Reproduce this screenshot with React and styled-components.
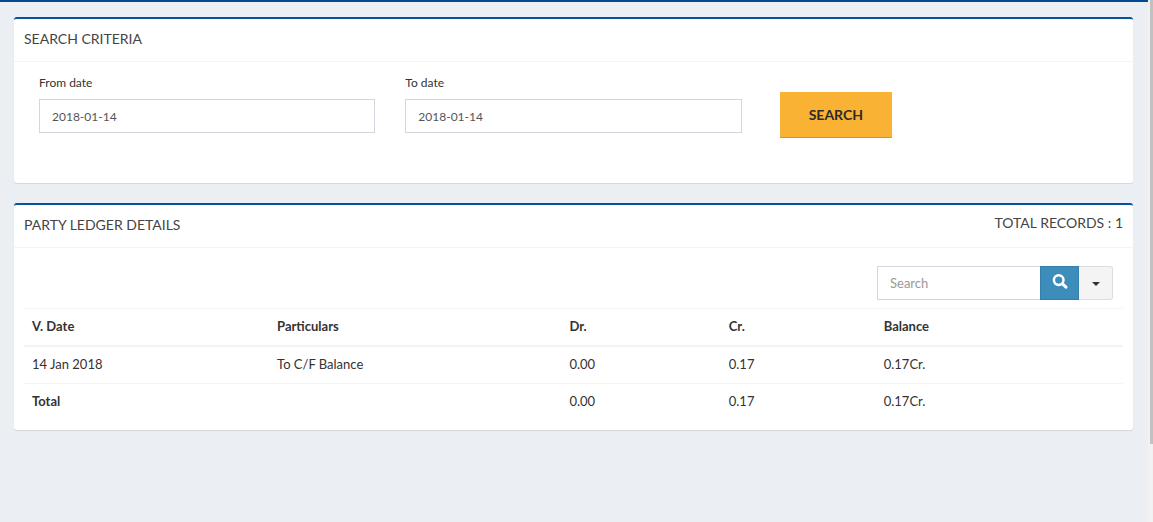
import React from "react";
import styled, { createGlobalStyle } from "styled-components";

const Global = createGlobalStyle`
  *, *::before, *::after { box-sizing: border-box; }
  body {
    margin: 0;
    background: #ebeef3;
    color: #333;
    font: 400 13px/20px Lato, Calibri, "Liberation Sans", sans-serif;
  }
  button, input { font: inherit; color: inherit; margin: 0; border-radius: 0; }
`;

const Page = styled.div`
  display: flex;
  min-height: 100vh;
`;

const Main = styled.main`
  flex: 1;
  min-width: 0;
  display: flex;
  flex-direction: column;
  gap: 20px;
  padding: 15px 15px 0 14px;
  border-top: 2px solid #004b93;
`;

const ScrollTrack = styled.div`
  width: 5px;
  padding-left: 2px;
  background: #f1f1f1;
`;

const ScrollThumb = styled.div`
  height: 85vh;
  background: #c1c1c1;
`;

const Card = styled.section`
  background: #fff;
  border-top: 2px solid #04539b;
  border-radius: 3px;
  box-shadow: 0 1px 1px rgba(0, 0, 0, 0.1);
`;

const CardHeader = styled.header`
  display: flex;
  justify-content: space-between;
  padding: 10px 10px 12px;
  border-bottom: 1px solid #f4f4f4;
`;

const Title = styled.h3`
  margin: 0;
  color: #444;
  font-size: 14px;
  line-height: 20px;
  font-weight: 400;
  text-transform: uppercase;
`;

const Records = styled(Title).attrs({ as: "div" })`
  line-height: 16px;
`;

const Form = styled.form`
  display: grid;
  grid-template-columns: repeat(3, 1fr);
  padding: 10px 10px 50px;
`;

const Field = styled.div`
  display: flex;
  flex-direction: column;
  gap: 6px;
  padding: 0 15px;
`;

const Label = styled.label`
  color: #333;
  font-size: 12px;
  line-height: 21px;
`;

const TextInput = styled.input`
  width: 100%;
  min-width: 0;
  height: 34px;
  padding: 6px 12px;
  border: 1px solid #d2d6de;
  background: #fff;
  color: #555;
  font-size: ${(p) => p.$size || 12}px;
  outline: 0;
  &::placeholder { color: #999; opacity: 1; }
`;

const Actions = styled.div`
  padding: 20px 23px 0;
  height: 61px;
`;

const SubmitButton = styled.button`
  height: 46px;
  padding: 0 29px;
  border: 0;
  border-bottom: 1px solid #d9951c;
  background: #f9b233;
  color: #2b2b2b;
  font-size: 14px;
  font-weight: 700;
`;

const LedgerBody = styled.div`
  padding: 18px 10px 10px;
`;

const SearchGroup = styled.form`
  display: flex;
  width: 236px;
  margin: 0 10px 8px auto;
`;

const QueryInput = styled(TextInput)`
  flex: 1;
  border-right: 0;
`;

const IconButton = styled.button`
  display: flex;
  justify-content: center;
  width: 39px;
  height: 34px;
  padding: 7px 0 0;
  border: 1px solid #367fa9;
  background: #3c8dbc;
`;

const MenuButton = styled.button`
  display: grid;
  place-items: center;
  width: 34px;
  height: 34px;
  padding: 2px 0 0;
  border: 1px solid #ddd;
  border-left: 0;
  border-radius: 0 3px 3px 0;
  background: #f4f4f4;
`;

const Caret = styled.span`
  border-top: 4px solid #333;
  border-left: 4px solid transparent;
  border-right: 4px solid transparent;
`;

const Table = styled.table`
  width: 100%;
  table-layout: fixed;
  border-collapse: separate;
  border-spacing: 0;
  th, td {
    padding: 7px 8px 9px;
    text-align: left;
    line-height: 20px;
  }
  thead th {
    border-top: 1px solid #f4f4f4;
    border-bottom: 2px solid #f4f4f4;
  }
  tfoot th, tfoot td { border-top: 1px solid #f4f4f4; }
`;

const Col = styled.col`
  width: ${(p) => p.$w};
`;

function SearchIcon() {
  return (
    <svg width="16" height="15" viewBox="0 0 16 15" fill="none" stroke="#fff" aria-hidden="true">
      <circle cx="6.7" cy="6.1" r="4.8" strokeWidth="2.5" />
      <path d="M10.6 9.9L14 13.1" strokeWidth="3" strokeLinecap="round" />
    </svg>
  );
}

const columns = [
  ["V. Date", "22.3%"],
  ["Particulars", "26.6%"],
  ["Dr.", "14.5%"],
  ["Cr.", "14.1%"],
  ["Balance", "22.5%"],
];

const rows = [["14 Jan 2018", "To C/F Balance", "0.00", "0.17", "0.17Cr."]];

export default function App() {
  const stop = (e) => e.preventDefault();
  return (
    <>
      <Global />
      <Page>
        <Main>
          <Card>
            <CardHeader>
              <Title>Search Criteria</Title>
            </CardHeader>
            <Form onSubmit={stop}>
              <Field>
                <Label htmlFor="from">From date</Label>
                <TextInput id="from" defaultValue="2018-01-14" />
              </Field>
              <Field>
                <Label htmlFor="to">To date</Label>
                <TextInput id="to" defaultValue="2018-01-14" />
              </Field>
              <Actions>
                <SubmitButton type="submit">SEARCH</SubmitButton>
              </Actions>
            </Form>
          </Card>
          <Card>
            <CardHeader>
              <Title>Party Ledger Details</Title>
              <Records>Total Records : 1</Records>
            </CardHeader>
            <LedgerBody>
              <SearchGroup onSubmit={stop}>
                <QueryInput $size={13} placeholder="Search" aria-label="Search" />
                <IconButton type="submit" aria-label="Run search">
                  <SearchIcon />
                </IconButton>
                <MenuButton type="button" aria-label="Search options">
                  <Caret />
                </MenuButton>
              </SearchGroup>
              <Table>
                <colgroup>
                  {columns.map(([name, w]) => (
                    <Col key={name} $w={w} />
                  ))}
                </colgroup>
                <thead>
                  <tr>
                    {columns.map(([name]) => (
                      <th key={name} scope="col">{name}</th>
                    ))}
                  </tr>
                </thead>
                <tbody>
                  {rows.map((row) => (
                    <tr key={row[0]}>
                      {row.map((cell, i) => (
                        <td key={i}>{cell}</td>
                      ))}
                    </tr>
                  ))}
                </tbody>
                <tfoot>
                  <tr>
                    <th scope="row">Total</th>
                    <td />
                    <td>0.00</td>
                    <td>0.17</td>
                    <td>0.17Cr.</td>
                  </tr>
                </tfoot>
              </Table>
            </LedgerBody>
          </Card>
        </Main>
        <ScrollTrack>
          <ScrollThumb />
        </ScrollTrack>
      </Page>
    </>
  );
}
